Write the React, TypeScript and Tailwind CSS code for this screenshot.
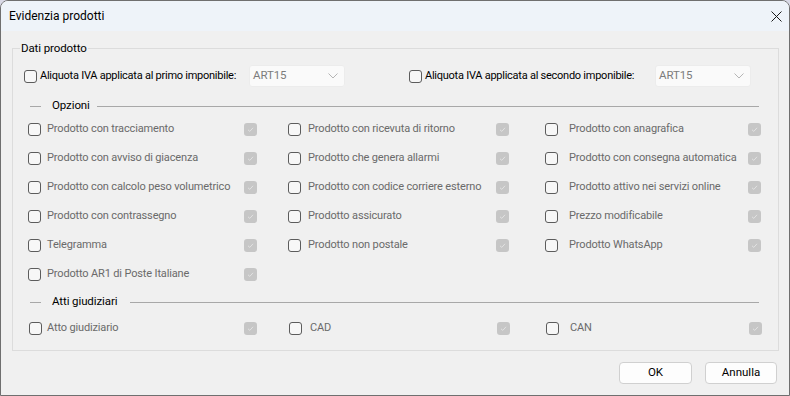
import React from "react";

const font = { fontFamily: "'Segoe UI', Roboto, Lato, 'Noto Sans', sans-serif" };

function Box() {
  return <span className="inline-block w-[13px] h-[13px] shrink-0 rounded-[3px] border border-[#5c5c5c] bg-[#f7f7f7]" />;
}

function DisabledCheck() {
  return (
    <span className="inline-flex w-[13px] h-[13px] shrink-0 rounded-[3px] bg-[#c6c6c6] items-center justify-center">
      <svg width="9" height="9" viewBox="0 0 9 9" fill="none">
        <path d="M2 4.8 L3.8 6.4 L7 2.8" stroke="#e2e2e2" strokeWidth="1" />
      </svg>
    </span>
  );
}

function Combo() {
  return (
    <div className="w-[96px] h-[22px] shrink-0 rounded-[3px] bg-[#fafafa] border border-[#ececec] flex items-center justify-between pl-[3px] pr-[6px]">
      <span className="text-[11.5px] tracking-[-0.1px] text-[#7c7c7c]">ART15</span>
      <svg width="10" height="6" viewBox="0 0 10 6" fill="none">
        <path d="M0.5 0.5 L5 5 L9.5 0.5" stroke="#b5b5b5" strokeWidth="1" />
      </svg>
    </div>
  );
}

function Sep({ label, lineStart }: { label: string; lineStart: string }) {
  return (
    <div className="flex items-center h-[16px]">
      <span className="ml-[17px] w-[11px] h-px bg-[#a8a8a8]" />
      <span className={"ml-[11px] text-[11.5px] tracking-[-0.1px] text-black " + lineStart}>{label}</span>
      <span className="flex-1 h-px bg-[#a8a8a8] mr-[19px]" />
    </div>
  );
}

function Opt({ label, w, gap }: { label: string; w: string; gap: string }) {
  return (
    <div className={"flex items-center h-[29px] " + w}>
      <Box />
      <span className={"text-[11px] tracking-[-0.15px] text-[#6a6a6a] whitespace-nowrap " + gap}>{label}</span>
      <span className="flex-1" />
      <DisabledCheck />
    </div>
  );
}

const col1 = ["Prodotto con tracciamento", "Prodotto con avviso di giacenza", "Prodotto con calcolo peso volumetrico", "Prodotto con contrassegno", "Telegramma", "Prodotto AR1 di Poste Italiane"];
const col2 = ["Prodotto con ricevuta di ritorno", "Prodotto che genera allarmi", "Prodotto con codice corriere esterno", "Prodotto assicurato", "Prodotto non postale"];
const col3 = ["Prodotto con anagrafica", "Prodotto con consegna automatica", "Prodotto attivo nei servizi online", "Prezzo modificabile", "Prodotto WhatsApp"];

export default function App() {
  return (
    <div className="w-[790px] h-[396px] bg-[#d9d9e6]" style={font}>
      <div className="w-[790px] h-[396px] rounded-t-[8px] border border-[#6f6f6f] bg-[#f0f0f0] flex flex-col overflow-hidden">
        <div className="h-[30px] bg-[#eef3f9] flex items-center justify-between pl-[8px] pr-[7px] shrink-0">
          <span className="text-[12px] text-black">Evidenzia prodotti</span>
          <svg width="11" height="11" viewBox="0 0 11 11" fill="none">
            <path d="M0.5 0.5 L10.5 10.5 M10.5 0.5 L0.5 10.5" stroke="#1a1a1a" strokeWidth="1" />
          </svg>
        </div>
        <div className="flex-1 pl-[11px] pr-[10px] pt-[9px]">
          <fieldset className="border border-[#dcdcdc] h-[311px] px-0">
            <legend className="ml-[7px] px-px text-[11.5px] tracking-[-0.1px] text-black leading-[16px]">Dati prodotto</legend>
            <div className="flex items-center h-[22px] mt-[9px] ml-[11px]">
              <div className="flex items-center w-[225px]">
                <Box />
                <span className="ml-[3px] text-[11px] tracking-[-0.25px] text-black whitespace-nowrap">Aliquota IVA applicata al primo imponibile:</span>
              </div>
              <Combo />
              <div className="flex items-center w-[246px] ml-[64px]">
                <Box />
                <span className="ml-[3px] text-[11px] tracking-[-0.25px] text-black whitespace-nowrap">Aliquota IVA applicata al secondo imponibile:</span>
              </div>
              <Combo />
            </div>
            <div className="mt-[11px]">
              <Sep label="Opzioni" lineStart="mr-[7px]" />
            </div>
            <div className="grid grid-cols-[260px_257px_216px] ml-[15px] mt-px">
              <div className="flex flex-col">
                {col1.map((l) => <Opt key={l} label={l} w="w-[229px]" gap="ml-[6px]" />)}
              </div>
              <div className="flex flex-col">
                {col2.map((l) => <Opt key={l} label={l} w="w-[221px]" gap="ml-[7px]" />)}
              </div>
              <div className="flex flex-col">
                {col3.map((l) => <Opt key={l} label={l} w="w-[216px]" gap="ml-[11px]" />)}
              </div>
            </div>
            <div className="mt-[5px]">
              <Sep label="Atti giudiziari" lineStart="mr-[13px]" />
            </div>
            <div className="grid grid-cols-[260px_257px_216px] ml-[16px] mt-[4px]">
              <Opt label="Atto giudiziario" w="w-[228px]" gap="ml-[5px]" />
              <Opt label="CAD" w="w-[221px]" gap="ml-[8px]" />
              <Opt label="CAN" w="w-[216px]" gap="ml-[11px]" />
            </div>
          </fieldset>
          <div className="flex justify-end gap-[13px] mt-[11px] mr-[2px]">
            <button className="w-[73px] h-[22px] rounded-[4px] border border-[#d0d0d0] bg-[#fdfdfd] text-[11.5px] text-black">OK</button>
            <button className="w-[72px] h-[22px] rounded-[4px] border border-[#d0d0d0] bg-[#fdfdfd] text-[11.5px] text-black">Annulla</button>
          </div>
        </div>
      </div>
    </div>
  );
}
